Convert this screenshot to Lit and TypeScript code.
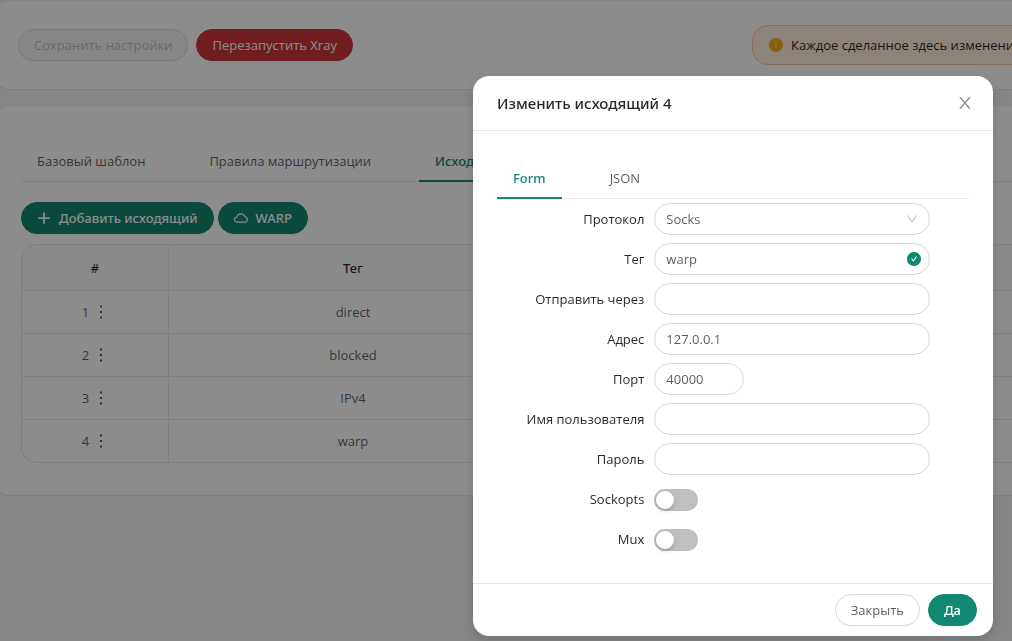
import { LitElement, html, css, svg } from "lit";
import { customElement, property, state } from "lit/decorators.js";
import { classMap } from "lit/directives/class-map.js";

const glyphs = {
  plus: svg`<path d="M456 152h112v304h304v112H568v304H456V568H152V456h304z"/>`,
  cloud: svg`<path d="M811.4 418.7C765.6 297.9 648.9 212 512.2 212S258.8 297.8 213 418.6C127.3 441.1 64 519.1 64 612c0 110.5 89.5 200 199.9 200h496.2C870.5 812 960 722.5 960 612c0-92.7-63.1-170.7-148.6-193.3zm36.3 281a123.07 123.07 0 0 1-87.6 36.3H263.9c-33.1 0-64.2-12.9-87.6-36.3A123.3 123.3 0 0 1 140 612c0-28 9.1-54.3 26.2-76.3a125.7 125.7 0 0 1 66.1-43.7l37.9-9.9 13.9-36.6c8.6-22.8 20.6-44.1 35.7-63.4a245.6 245.6 0 0 1 52.4-49.9c41.1-28.9 89.5-44.2 140-44.2s98.9 15.3 140 44.2c19.9 14 37.5 30.8 52.4 49.9 15.1 19.3 27.1 40.7 35.7 63.4l13.8 36.5 37.8 10c54.3 14.5 92.1 63.8 92.1 120 0 33.1-12.9 64.3-36.3 87.7z"/>`,
  down: svg`<path d="M884 256h-75c-5.1 0-9.9 2.5-12.9 6.6L512 654.2 227.9 262.6c-3-4.1-7.8-6.6-12.9-6.6h-75c-6.5 0-10.3 7.4-6.5 12.7l352.6 486.1c12.8 17.6 39 17.6 51.7 0l352.6-486.1c3.9-5.3.1-12.7-6.4-12.7z"/>`,
  close: svg`<path d="M563.8 512l262.5-312.9c4.4-5.2.7-13.1-6.1-13.1h-79.8c-4.7 0-9.2 2.1-12.3 5.7L511.6 449.8 295.1 191.7c-3-3.6-7.5-5.7-12.3-5.7H203c-6.8 0-10.5 7.9-6.1 13.1L459.4 512 196.9 824.9A7.95 7.95 0 0 0 203 838h79.8c4.7 0 9.2-2.1 12.3-5.7l216.5-258.1 216.5 258.1c3 3.6 7.5 5.7 12.3 5.7h79.8c6.8 0 10.5-7.9 6.1-13.1L563.8 512z"/>`,
  check: svg`<path d="M512 64C264.6 64 64 264.6 64 512s200.6 448 448 448 448-200.6 448-448S759.4 64 512 64zm193.5 301.7l-210.6 292a31.8 31.8 0 0 1-51.7 0L318.5 484.9c-3.8-5.3 0-12.7 6.5-12.7h46.9c10.2 0 19.9 4.9 25.9 13.3l71.2 98.8 157.2-218c6-8.3 15.6-13.3 25.9-13.3H699c6.5 0 10.3 7.4 6.5 12.7z"/>`,
  warning: svg`<path d="M512 64C264.6 64 64 264.6 64 512s200.6 448 448 448 448-200.6 448-448S759.4 64 512 64zm-32 232c0-4.4 3.6-8 8-8h48c4.4 0 8 3.6 8 8v272c0 4.4-3.6 8-8 8h-48c-4.4 0-8-3.6-8-8V296zm32 440a48.01 48.01 0 0 1 0-96 48.01 48.01 0 0 1 0 96z"/>`,
  more: svg`<path d="M448 96h128v128H448zM448 448h128v128H448zM448 800h128v128H448z"/>`,
};

@customElement("ui-icon")
class UiIcon extends LitElement {
  @property() name: keyof typeof glyphs = "plus";

  static styles = css`
    :host {
      display: inline-flex;
      flex: none;
      width: 14px;
      height: 14px;
    }
    .glyph {
      width: 100%;
      height: 100%;
      fill: currentColor;
    }
  `;

  render() {
    return html`<svg class="glyph" viewBox="64 64 896 896" aria-hidden="true">${glyphs[this.name]}</svg>`;
  }
}

const controls = css`
  * {
    box-sizing: border-box;
  }
  button,
  input,
  select {
    font: inherit;
    color: inherit;
    margin: 0;
  }
  button {
    cursor: pointer;
  }
  .btn {
    display: inline-flex;
    align-items: center;
    gap: 8px;
    height: 32px;
    padding: 0 15px;
    border: 1px solid #d9d9d9;
    border-radius: 16px;
    background: #fff;
    white-space: nowrap;
    box-shadow: 0 2px 0 rgba(0, 0, 0, 0.02);
  }
  .btn.primary,
  .btn.danger {
    color: #fff;
  }
  .btn.primary {
    font-family: "Noto Sans", sans-serif;
    font-weight: 500;
    background: #118870;
    border-color: #118870;
  }
  .btn.danger {
    background: #cc3639;
    border-color: #cc3639;
  }
  .btn:disabled {
    color: rgba(0, 0, 0, 0.25);
    background: #f5f5f5;
    cursor: default;
  }
  .tabs {
    display: flex;
    gap: 32px;
    border-bottom: 1px solid #e8e8e8;
  }
  .tab {
    height: 44px;
    margin-bottom: -1px;
    padding: 3px 16px 0;
    border: 0;
    border-bottom: 2px solid transparent;
    background: none;
    white-space: nowrap;
  }
  .tab.active {
    color: #118870;
    border-bottom-color: #118870;
    font-family: "Noto Sans", sans-serif;
    font-weight: 500;
  }
`;

@customElement("outbound-modal")
class OutboundModal extends LitElement {
  @state() private view = "Form";

  static styles = [
    controls,
    css`
      :host {
        display: block;
        width: 520px;
        max-width: 100%;
      }
      .dialog {
        background: #fff;
        border-radius: 16px;
        box-shadow: 0 4px 12px rgba(0, 0, 0, 0.15);
      }
      .head {
        display: flex;
        align-items: center;
        justify-content: space-between;
        height: 55px;
        padding: 0 20px 0 24px;
        border-bottom: 1px solid #e8e8e8;
      }
      .title {
        margin: 0;
        font: 500 15px/22px "Noto Sans", sans-serif;
        color: rgba(0, 0, 0, 0.85);
      }
      .close {
        display: flex;
        padding: 0;
        border: 0;
        background: none;
        color: rgba(0, 0, 0, 0.45);
      }
      .close ui-icon {
        width: 16px;
        height: 16px;
      }
      .body {
        padding: 24px;
      }
      .row {
        display: grid;
        grid-template-columns: 8fr 14fr 2fr;
        align-items: center;
        min-height: 40px;
      }
      .label {
        padding-right: 10px;
        text-align: right;
        white-space: nowrap;
        color: rgba(0, 0, 0, 0.85);
      }
      .control {
        display: flex;
        align-items: center;
        position: relative;
      }
      .field {
        width: 100%;
        height: 32px;
        padding: 0 11px;
        border: 1px solid #d9d9d9;
        border-radius: 16px;
        background: #fff;
        outline: none;
        appearance: none;
      }
      .field.short {
        width: 90px;
        appearance: textfield;
      }
      .field::-webkit-inner-spin-button {
        display: none;
      }
      .mark {
        position: absolute;
        pointer-events: none;
      }
      .mark.arrow {
        right: 12px;
        width: 12px;
        height: 12px;
        color: rgba(0, 0, 0, 0.25);
      }
      .mark.valid {
        right: 9px;
        color: #118870;
      }
      .switch {
        display: flex;
        align-items: center;
        width: 44px;
        height: 22px;
        margin-top: 2px;
        padding: 2px;
        border-radius: 11px;
        background: #bfbfbf;
        appearance: none;
        cursor: pointer;
      }
      .switch::before {
        content: "";
        width: 18px;
        height: 18px;
        border-radius: 50%;
        background: #fff;
        box-shadow: 0 2px 4px rgba(0, 35, 11, 0.2);
      }
      .switch:checked {
        justify-content: flex-end;
        background: #118870;
      }
      .foot {
        display: flex;
        justify-content: flex-end;
        gap: 8px;
        padding: 10px 16px;
        border-top: 1px solid #e8e8e8;
      }
    `,
  ];

  private text(id: string, label: string, value = "", valid = false) {
    return html`<div class="row">
      <label class="label" for=${id}>${label}</label>
      <div class="control">
        <input class="field" id=${id} type="text" .value=${value} />
        ${valid ? html`<ui-icon class="mark valid" name="check"></ui-icon>` : ""}
      </div>
    </div>`;
  }

  private toggle(id: string, label: string) {
    return html`<div class="row">
      <label class="label" for=${id}>${label}</label>
      <div class="control"><input class="switch" id=${id} type="checkbox" role="switch" /></div>
    </div>`;
  }

  render() {
    return html`
      <div class="dialog" role="dialog" aria-labelledby="title">
        <div class="head">
          <h2 class="title" id="title">Изменить исходящий 4</h2>
          <button class="close"><ui-icon name="close"></ui-icon></button>
        </div>
        <div class="body">
          <div class="tabs" role="tablist">
            ${["Form", "JSON"].map(
              (name) => html`<button
                role="tab"
                class=${classMap({ tab: true, active: this.view === name })}
                @click=${() => (this.view = name)}
              >${name}</button>`
            )}
          </div>
          <div class="row">
            <label class="label" for="protocol">Протокол</label>
            <div class="control">
              <select class="field" id="protocol">
                <option>Socks</option>
              </select>
              <ui-icon class="mark arrow" name="down"></ui-icon>
            </div>
          </div>
          ${this.text("tag", "Тег", "warp", true)}
          ${this.text("via", "Отправить через")}
          ${this.text("address", "Адрес", "127.0.0.1")}
          <div class="row">
            <label class="label" for="port">Порт</label>
            <div class="control"><input class="field short" id="port" type="number" .value=${"40000"} /></div>
          </div>
          ${this.text("user", "Имя пользователя")}
          ${this.text("password", "Пароль")}
          ${this.toggle("sockopts", "Sockopts")}
          ${this.toggle("mux", "Mux")}
        </div>
        <div class="foot">
          <button class="btn">Закрыть</button>
          <button class="btn primary">Да</button>
        </div>
      </div>
    `;
  }
}

@customElement("app-root")
class AppRoot extends LitElement {
  private outbounds = ["direct", "blocked", "IPv4", "warp"];

  static styles = [
    controls,
    css`
      :host {
        display: block;
        min-height: 100vh;
        overflow: hidden;
        background: #f0f2f5;
        color: rgba(0, 0, 0, 0.65);
        font: 13px/20px "Open Sans", "Noto Sans", sans-serif;
      }
      .page {
        display: flex;
        flex-direction: column;
        gap: 17px;
        margin: 0 -32px 0 -6px;
        padding-top: 1px;
      }
      .card {
        background: #fff;
        border-radius: 16px;
        box-shadow: 0 1px 0 #e8e8e8;
      }
      .toolbar {
        display: grid;
        grid-template-columns: minmax(0, 3fr) minmax(0, 1fr);
        align-items: center;
        gap: 8px;
        padding: 24px 50px 24px 24px;
      }
      .actions {
        display: flex;
        gap: 8px;
      }
      .alert {
        display: flex;
        align-items: center;
        gap: 8px;
        width: max-content;
        height: 40px;
        padding: 0 16px;
        border: 1px solid #ffc29a;
        border-radius: 16px;
        background: #ffeee1;
        color: rgba(0, 0, 0, 0.85);
        white-space: nowrap;
      }
      .alert ui-icon {
        color: #faad14;
      }
      .outbounds {
        padding: 32px 0 32px 27px;
      }
      .buttons {
        display: flex;
        gap: 4px;
        padding: 20px 0 10px;
      }
      .frame {
        border: 1px solid #e8e8e8;
        border-right: 0;
        border-radius: 16px 0 0 16px;
        overflow: hidden;
      }
      .grid {
        width: 100%;
        table-layout: fixed;
        border-collapse: separate;
        border-spacing: 0;
        text-align: center;
      }
      .grid th,
      .grid td {
        height: 43px;
        padding: 0;
        border-right: 1px solid #e8e8e8;
        border-bottom: 1px solid #e8e8e8;
      }
      .grid th {
        height: 46px;
        background: #fafafa;
        color: rgba(0, 0, 0, 0.85);
        font-family: "Noto Sans", sans-serif;
        font-weight: 500;
      }
      .grid tbody tr:last-child td {
        height: 42px;
        border-bottom: 0;
      }
      .index {
        width: 147px;
      }
      .tag {
        width: 369px;
      }
      .cell {
        display: flex;
        align-items: center;
        justify-content: center;
        gap: 5px;
      }
      .menu {
        display: flex;
        padding: 0;
        border: 0;
        background: none;
      }
      .overlay {
        position: fixed;
        inset: 0;
        display: flex;
        justify-content: flex-end;
        align-items: flex-start;
        padding: 76px 19px 0;
        background: rgba(0, 0, 0, 0.45);
      }
    `,
  ];

  render() {
    return html`
      <main class="page">
        <section class="card toolbar">
          <div class="actions">
            <button class="btn" disabled>Сохранить настройки</button>
            <button class="btn danger">Перезапустить Xray</button>
          </div>
          <div class="alert" role="alert">
            <ui-icon name="warning"></ui-icon>
            <span>Каждое сделанное здесь изменение</span>
          </div>
        </section>
        <section class="card outbounds">
          <div class="tabs" role="tablist">
            <button class="tab" role="tab">Базовый шаблон</button>
            <button class="tab" role="tab">Правила маршрутизации</button>
            <button class="tab active" role="tab">Исходящие</button>
          </div>
          <div class="buttons">
            <button class="btn primary"><ui-icon name="plus"></ui-icon>Добавить исходящий</button>
            <button class="btn primary"><ui-icon name="cloud"></ui-icon>WARP</button>
          </div>
          <div class="frame">
            <table class="grid">
              <thead>
                <tr>
                  <th class="index">#</th>
                  <th class="tag">Тег</th>
                  <th></th>
                </tr>
              </thead>
              <tbody>
                ${this.outbounds.map(
                  (tag, i) => html`<tr>
                    <td>
                      <div class="cell">
                        ${i + 1}
                        <button class="menu"><ui-icon name="more"></ui-icon></button>
                      </div>
                    </td>
                    <td>${tag}</td>
                    <td></td>
                  </tr>`
                )}
              </tbody>
            </table>
          </div>
        </section>
      </main>
      <div class="overlay"><outbound-modal></outbound-modal></div>
    `;
  }
}
